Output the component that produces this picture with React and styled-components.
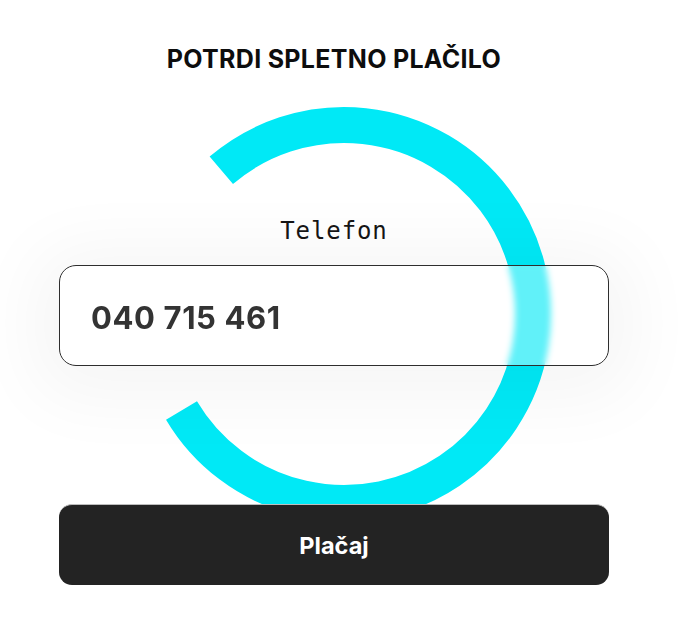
import React from "react";
import styled, { createGlobalStyle } from "styled-components";

const Global = createGlobalStyle`
  html, body { margin: 0; padding: 0; background: #ffffff; }
  body { font-family: "Inter", "Noto Sans", sans-serif; }
  * { box-sizing: border-box; }
`;

const Page = styled.main`
  width: 680px;
  height: 626px;
  padding: 44px 71px 0 59px;
  display: flex;
  flex-direction: column;
  align-items: stretch;
  overflow: hidden;
`;

const Title = styled.h1`
  margin: 0;
  text-align: center;
  font-family: "Inter", "Noto Sans", sans-serif;
  font-weight: 700;
  font-size: 25px;
  line-height: 30px;
  letter-spacing: 0.3px;
  color: #0d0d0d;
`;

const Stage = styled.section`
  position: relative;
  display: flex;
  flex-direction: column;
  padding-top: 141px;
`;

const RingSvg = styled.svg`
  position: absolute;
  left: 75px;
  top: 30px;
  width: 420px;
  height: 420px;
  z-index: 0;
  overflow: visible;
`;

const Field = styled.div`
  position: relative;
  z-index: 1;
  display: flex;
  flex-direction: column;
  align-items: stretch;
  gap: 20px;
`;

const Label = styled.label`
  text-align: center;
  font-family: "DejaVu Sans Mono", "Liberation Mono", monospace;
  font-weight: 400;
  font-size: 24px;
  line-height: 28px;
  letter-spacing: 0.9px;
  color: #161616;
  padding-top: 2px;
`;

const InputBox = styled.div`
  height: 101px;
  border: 1px solid #2e2e2e;
  border-radius: 17px;
  background: rgba(255, 255, 255, 0.38);
  backdrop-filter: blur(3px);
  -webkit-backdrop-filter: blur(3px);
  box-shadow: 0 8px 70px 26px rgba(0, 0, 0, 0.04);
  display: flex;
  align-items: center;
  padding: 3px 0 0 31px;
`;

const Value = styled.span`
  font-family: "Inter", "Noto Sans", sans-serif;
  font-weight: 700;
  font-size: 31px;
  letter-spacing: 0.6px;
  color: #333333;
`;

const PayButton = styled.button`
  position: relative;
  z-index: 1;
  margin-top: 138px;
  height: 81px;
  border: none;
  border-top: 1px solid #bdbdbd;
  border-radius: 13px;
  background: #232323;
  color: #ffffff;
  font-family: "Inter", "Noto Sans", sans-serif;
  font-weight: 700;
  font-size: 23.5px;
  cursor: pointer;
`;

export default function App() {
  return (
    <>
      <Global />
      <Page>
        <Title>POTRDI SPLETNO PLAČILO</Title>
        <Stage>
          <RingSvg viewBox="0 0 420 420" aria-hidden="true">
            <path
              d="M 87.3 66.3 A 189 189 0 1 1 47.5 306.5"
              fill="none"
              stroke="#00E9F6"
              strokeWidth="36"
              strokeLinecap="butt"
            />
          </RingSvg>
          <Field>
            <Label>Telefon</Label>
            <InputBox>
              <Value>040 715 461</Value>
            </InputBox>
          </Field>
        </Stage>
        <PayButton>Plačaj</PayButton>
      </Page>
    </>
  );
}
